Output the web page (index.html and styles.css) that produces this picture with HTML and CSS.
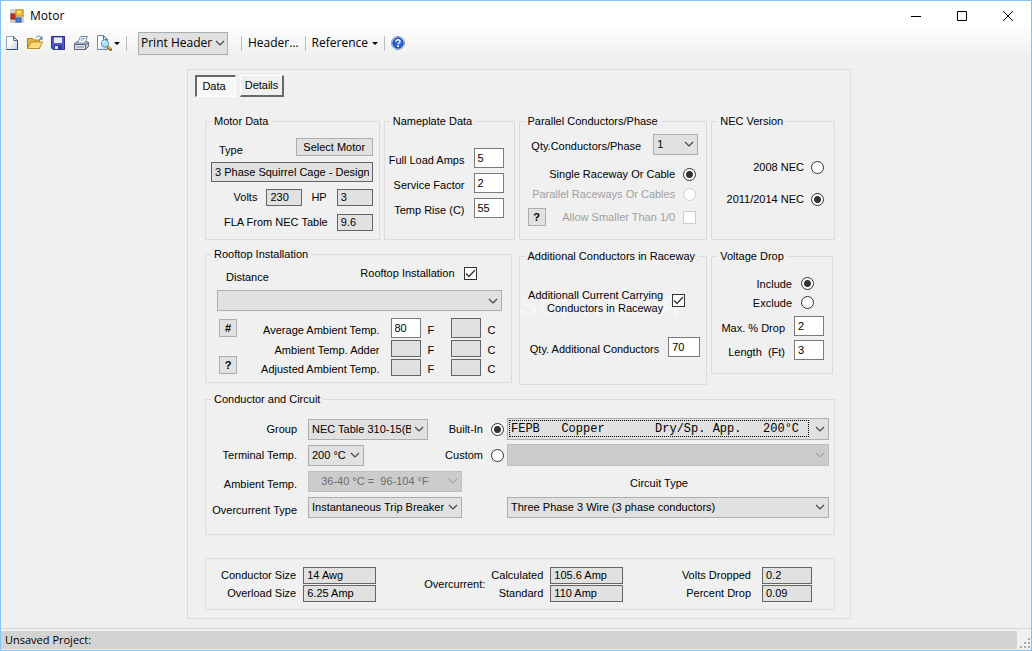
FILE: index.html
```html
<!DOCTYPE html>
<html lang="en">
<head>
    <meta charset="UTF-8">
    <meta name="viewport" content="width=device-width, initial-scale=1.0">
    <title>Motor</title>
    <link rel="stylesheet" href="styles.css">
</head>
<body>
    <div class="window">
        <header class="title-bar">
            <svg class="app-icon" width="14" height="14" viewBox="0 0 14 14">
                <rect x="0" y="0" width="14" height="14" fill="#d4d0c8"/>
                <rect x="1" y="5" width="4" height="5" fill="#c8311c" stroke="#8e1d10"/>
                <rect x="6" y="1" width="7" height="6" fill="#fbc62f" stroke="#c98a10"/>
                <rect x="7" y="2" width="4" height="2" fill="#ffe58a"/>
                <rect x="6" y="9" width="5" height="4" fill="#4f83e0" stroke="#2450a8"/>
            </svg>
            <h1>Motor</h1>
            <div class="window-buttons">
                <button type="button" aria-label="Minimize"><svg width="12" height="12" viewBox="0 0 12 12"><path d="M1 6.500h10" /></svg></button>
                <button type="button" aria-label="Maximize"><svg width="12" height="12" viewBox="0 0 12 12"><path d="M1.500 1.500h9v9h-9z" /></svg></button>
                <button type="button" aria-label="Close"><svg width="12" height="12" viewBox="0 0 12 12"><path d="M1 1l10 10M11 1L1 11" /></svg></button>
            </div>
        </header>

        <nav class="toolbar">
            <div class="tool-icons">
                <button type="button" aria-label="New">
                    <svg width="16" height="16" viewBox="0 0 16 16">
                        <defs><linearGradient id="paper" x1="0" y1="0" x2="1" y2="1"><stop offset="0.4" stop-color="#fff"/><stop offset="1" stop-color="#b9cbe6"/></linearGradient></defs>
                        <path d="M2.500 1.500h7l4 4v9h-11z" fill="url(#paper)" stroke="#8ba0c0"/>
                        <path d="M13.500 5v9.500h-11" fill="none" stroke="#2f4a78"/>
                        <path d="M9.500 1.500v4h4z" fill="#dbe6f5" stroke="#4d6a98"/>
                    </svg>
                </button>
                <button type="button" aria-label="Open">
                    <svg width="16" height="16" viewBox="0 0 16 16">
                        <path d="M.5 13.500v-10h5l1.500 1.500h5.500v8.500z" fill="#e5b340" stroke="#b07f1e"/>
                        <path d="M.8 13.500l3-6.500h11.700l-3.200 6.500z" fill="#ffdd7a" stroke="#c08c22"/>
                        <path d="M9 2.500c1.500-2 4-1.800 5.200 0" fill="none" stroke="#5f7ea8"/>
                        <path d="M15.500 .8v4h-4z" fill="#5f7ea8"/>
                    </svg>
                </button>
                <button type="button" aria-label="Save">
                    <svg width="16" height="16" viewBox="0 0 16 16">
                        <path d="M1.500 1.500h13v13h-11.500l-1.500-1.500z" fill="#5159cf" stroke="#272f91"/>
                        <rect x="4" y="2" width="8" height="6" fill="#e9edfa"/>
                        <rect x="4" y="2" width="8" height="1" fill="#9ba6e6"/>
                        <rect x="4" y="10" width="8" height="5" fill="#323a8d"/>
                        <rect x="5" y="11" width="3" height="3" fill="#dde2f2"/>
                    </svg>
                </button>
                <button type="button" aria-label="Print">
                    <svg width="16" height="16" viewBox="0 0 16 16">
                        <path d="M1.500 8.500l3-2h9l2 1v4l-3 3h-11z" fill="#b9c3d4" stroke="#5c6980"/>
                        <path d="M4.500 8l3-6.500h7l-2.500 6.500z" fill="#fff" stroke="#7889a6"/>
                        <path d="M8 3.500h4M7.200 5h4" stroke="#93a8ca"/>
                        <path d="M1.500 9.500h11v5h-11z" fill="#dfe5ef" stroke="#56647d"/>
                        <path d="M3 12h8" stroke="#7d8aa2" stroke-width="1"/>
                        <path d="M12.500 9.500l3-2" stroke="#56647d"/>
                    </svg>
                </button>
                <button type="button" class="preview" aria-label="Print preview">
                    <svg width="16" height="16" viewBox="0 0 16 16">
                        <path d="M1.500 .5h6l4 4v10h-10z" fill="url(#paper)" stroke="#6f88b2"/>
                        <path d="M7.500 .5v4h4z" fill="#dbe6f5" stroke="#4d6a98"/>
                        <path d="M11.500 11.500l3 3" stroke="#8a6114" stroke-width="3" stroke-linecap="round"/>
                        <path d="M12 11.500l2.500 2.500" stroke="#f2ba36" stroke-width="1.500"/>
                        <circle cx="9" cy="8.500" r="3.700" fill="#a5e3fa" stroke="#5e98bd"/>
                        <path d="M7 8a2 2 0 0 1 2-1.800" stroke="#fff" fill="none"/>
                    </svg>
                    <span class="arrow"></span>
                </button>
            </div>
            <span class="separator"></span>
            <select class="header-select" aria-label="Print header"><option>Print Header</option></select>
            <span class="separator"></span>
            <button type="button" class="tool-text">Header…</button>
            <span class="separator"></span>
            <button type="button" class="tool-text">Reference <span class="arrow"></span></button>
            <span class="separator"></span>
            <button type="button" aria-label="Help">
                <svg width="14" height="14" viewBox="0 0 14 14">
                    <circle cx="7" cy="7" r="6.500" fill="#dce7fb" stroke="#7f9bd0"/>
                    <circle cx="7" cy="7" r="5.200" fill="#2b62d9" stroke="#1c47ae"/>
                    <path d="M5 5.700c0-2.600 4-2.600 4-.2 0 1.500-2 1.400-2 3" fill="none" stroke="#fff" stroke-width="1.400"/>
                    <rect x="6" y="9.500" width="2" height="1.500" fill="#fff"/>
                </svg>
            </button>
        </nav>

        <main>
            <form class="panel">
                <div class="tabs">
                    <button type="button" class="tab active">Data</button>
                    <button type="button" class="tab">Details</button>
                </div>

                <div class="groups-top">
                    <fieldset class="motor">
                        <legend>Motor Data</legend>
                        <div class="row spread">
                            <label for="type" class="type-label">Type</label>
                            <button type="button" class="btn">Select Motor</button>
                        </div>
                        <div class="row"><input id="type" class="box tall" value="3 Phase Squirrel Cage - Design" readonly></div>
                        <div class="row">
                            <label for="volts">Volts</label>
                            <input id="volts" class="box w36" value="230" readonly>
                            <label for="hp">HP</label>
                            <input id="hp" class="box w36 last" value="3" readonly>
                        </div>
                        <div class="row">
                            <label for="fla">FLA From NEC Table</label>
                            <input id="fla" class="box w36" value="9.6" readonly>
                        </div>
                    </fieldset>

                    <fieldset class="nameplate">
                        <legend>Nameplate Data</legend>
                        <div class="row"><label for="amps">Full Load Amps</label><input id="amps" class="field" value="5"></div>
                        <div class="row"><label for="factor">Service Factor</label><input id="factor" class="field" value="2"></div>
                        <div class="row"><label for="rise">Temp Rise (C)</label><input id="rise" class="field" value="55"></div>
                    </fieldset>

                    <fieldset class="parallel">
                        <legend>Parallel Conductors/Phase</legend>
                        <div class="row qty">
                            <label for="qty-phase">Qty.Conductors/Phase</label>
                            <select id="qty-phase"><option>1</option></select>
                        </div>
                        <div class="row"><label for="single">Single Raceway Or Cable</label><input type="radio" name="raceway" id="single" checked></div>
                        <div class="row"><label for="parallel" class="off">Parallel Raceways Or Cables</label><input type="radio" name="raceway" id="parallel" disabled></div>
                        <div class="row smaller">
                            <button type="button" class="btn square">?</button>
                            <label for="smaller" class="off">Allow Smaller Than 1/0</label>
                            <input type="checkbox" id="smaller" disabled>
                        </div>
                    </fieldset>

                    <fieldset class="nec">
                        <legend>NEC Version</legend>
                        <div class="row"><label for="nec08">2008 NEC</label><input type="radio" name="nec" id="nec08"></div>
                        <div class="row"><label for="nec11">2011/2014 NEC</label><input type="radio" name="nec" id="nec11" checked></div>
                    </fieldset>
                </div>

                <div class="groups-middle">
                    <fieldset class="rooftop">
                        <legend>Rooftop Installation</legend>
                        <div class="row spread">
                            <label for="distance">Distance</label>
                            <span class="row check">
                                <label for="roof">Rooftop Installation</label>
                                <input type="checkbox" id="roof" checked>
                            </span>
                        </div>
                        <select id="distance"><option></option></select>
                        <div class="temps">
                            <div class="temp-buttons">
                                <button type="button" class="btn square">#</button>
                                <button type="button" class="btn square">?</button>
                            </div>
                            <div class="temp-grid">
                                <label for="avg-f">Average Ambient Temp.</label>
                                <input id="avg-f" class="field" value="80"><span>F</span>
                                <input class="box tall" aria-label="Average, Celsius" readonly><span>C</span>
                                <label for="add-f">Ambient Temp. Adder</label>
                                <input id="add-f" class="box" readonly><span>F</span>
                                <input class="box" aria-label="Adder, Celsius" readonly><span>C</span>
                                <label for="adj-f">Adjusted Ambient Temp.</label>
                                <input id="adj-f" class="box" readonly><span>F</span>
                                <input class="box" aria-label="Adjusted, Celsius" readonly><span>C</span>
                            </div>
                        </div>
                    </fieldset>

                    <fieldset class="additional">
                        <legend>Additional Conductors in Raceway</legend>
                        <span class="watermark" aria-hidden="true">SOFTPEDIA</span>
                        <div class="row carrying">
                            <label for="carrying">Additionall Current Carrying<br>Conductors in Raceway</label>
                            <input type="checkbox" id="carrying" checked>
                        </div>
                        <div class="row">
                            <label for="qty-add">Qty. Additional Conductors</label>
                            <input id="qty-add" class="field" value="70">
                        </div>
                    </fieldset>

                    <fieldset class="voltage">
                        <legend>Voltage Drop</legend>
                        <div class="row pick"><label for="include">Include</label><input type="radio" name="drop" id="include" checked></div>
                        <div class="row pick"><label for="exclude">Exclude</label><input type="radio" name="drop" id="exclude"></div>
                        <div class="row value"><label for="max-drop">Max. % Drop</label><input id="max-drop" class="field" value="2"></div>
                        <div class="row value"><label for="length">Length &nbsp;(Ft)</label><input id="length" class="field" value="3"></div>
                    </fieldset>
                </div>

                <fieldset class="conductor">
                    <legend>Conductor and Circuit</legend>
                    <div class="circuit-left">
                        <label for="group">Group</label>
                        <select id="group" class="w120"><option>NEC Table 310-15(B)(16)</option></select>
                        <label for="terminal">Terminal Temp.</label>
                        <select id="terminal" class="w56"><option>200 °C</option></select>
                        <label for="ambient" class="low">Ambient Temp.</label>
                        <select id="ambient" disabled><option>&nbsp;&nbsp; 36-40 °C =&nbsp; 96-104 °F</option></select>
                        <label for="overcurrent" class="low">Overcurrent Type</label>
                        <select id="overcurrent"><option>Instantaneous Trip Breaker</option></select>
                    </div>
                    <div class="circuit-right">
                        <span class="row source"><label for="builtin">Built-In</label><input type="radio" name="source" id="builtin" checked></span>
                        <div class="focused">
                            <select class="mono" aria-label="Built-in conductor"><option>FEPB&nbsp;&nbsp; Copper&nbsp;&nbsp;&nbsp;&nbsp;&nbsp;&nbsp; Dry/Sp. App.&nbsp;&nbsp; 200°C</option></select>
                        </div>
                        <span class="row source"><label for="custom">Custom</label><input type="radio" name="source" id="custom"></span>
                        <select aria-label="Custom conductor" disabled><option></option></select>
                        <label for="circuit" class="circuit-label">Circuit Type</label>
                        <select id="circuit" class="circuit-select"><option>Three Phase 3 Wire (3 phase conductors)</option></select>
                    </div>
                </fieldset>

                <section class="results">
                    <div class="result-grid">
                        <label for="size">Conductor Size</label><input id="size" class="box" value="14 Awg" readonly>
                        <label for="overload">Overload Size</label><input id="overload" class="box" value="6.25 Amp" readonly>
                    </div>
                    <span class="over-title">Overcurrent:</span>
                    <div class="result-grid">
                        <label for="calc">Calculated</label><input id="calc" class="box" value="105.6 Amp" readonly>
                        <label for="standard">Standard</label><input id="standard" class="box" value="110 Amp" readonly>
                    </div>
                    <div class="result-grid dropped">
                        <label for="v-drop">Volts Dropped</label><input id="v-drop" class="box" value="0.2" readonly>
                        <label for="p-drop">Percent Drop</label><input id="p-drop" class="box" value="0.09" readonly>
                    </div>
                </section>
            </form>
        </main>

        <footer class="status-bar">
            <span class="status">Unsaved Project:</span>
            <svg class="grip" width="12" height="12" viewBox="0 0 12 12">
                <path d="M9 1h2v2h-2zM5 5h2v2h-2zM9 5h2v2h-2zM1 9h2v2h-2zM5 9h2v2h-2zM9 9h2v2h-2z" fill="#a8a8a8"/>
            </svg>
        </footer>
    </div>
</body>
</html>
```

FILE: styles.css
```css
:root {
    --face: #f0f0f0;
    --line: #dcdcdc;
    --control: #e1e1e1;
    --control-border: #adadad;
    --box-border: #646464;
    --field-border: #7a7a7a;
    --accent: #84c3f7;
    --chevron: url("data:image/svg+xml,%3Csvg xmlns='http://www.w3.org/2000/svg' width='10' height='6'%3E%3Cpath d='M1 1l4 4 4-4' fill='none' stroke='%23444' stroke-width='1.200'/%3E%3C/svg%3E");
    --chevron-off: url("data:image/svg+xml,%3Csvg xmlns='http://www.w3.org/2000/svg' width='10' height='6'%3E%3Cpath d='M1 1l4 4 4-4' fill='none' stroke='%23a6a6a6' stroke-width='1.200'/%3E%3C/svg%3E");
    --tick: url("data:image/svg+xml,%3Csvg xmlns='http://www.w3.org/2000/svg' width='11' height='11'%3E%3Cpath d='M1 5.500l3 3 6-6.500' fill='none' stroke='%23333' stroke-width='1.300'/%3E%3C/svg%3E");
}

* {
    margin: 0;
    padding: 0;
    box-sizing: border-box;
}

body {
    font-family: "Liberation Sans", Arial, sans-serif;
    font-size: 11px;
    line-height: 14px;
    color: #000;
    background: var(--face);
}

button, input, select {
    font: inherit;
    color: inherit;
}

.window {
    min-height: 100vh;
    display: flex;
    flex-direction: column;
    border: 1px solid var(--accent);
}

/* title bar */
.title-bar {
    display: flex;
    align-items: center;
    height: 29px;
    padding-left: 9px;
    background: #fff;
    font-family: "Open Sans", sans-serif;
}

.title-bar h1 {
    margin-left: 6px;
    font-size: 12px;
    font-weight: 400;
}

.window-buttons {
    display: flex;
    margin-left: auto;
}

.window-buttons button {
    width: 46px;
    height: 28px;
    border: none;
    background: none;
}

.window-buttons svg {
    display: block;
    margin: 0 auto;
    fill: none;
    stroke: #000;
}

/* toolbar */
.toolbar {
    display: flex;
    align-items: center;
    height: 26px;
    padding-left: 3px;
    background: linear-gradient(#fcfcfc, var(--face));
    font-family: "Open Sans", sans-serif;
    font-size: 12px;
}

.toolbar button {
    display: flex;
    align-items: center;
    border: none;
    background: none;
}

.tool-icons {
    display: flex;
    gap: 7px;
}

.arrow {
    border: 3px solid transparent;
    border-top-color: #000;
    border-bottom: none;
}

.preview .arrow {
    margin-left: 2px;
}

.separator {
    width: 1px;
    height: 15px;
    margin: 0 6px;
    background: #bdbdbd;
}

/* controls */
select {
    appearance: none;
    width: 100%;
    height: 21px;
    padding: 0 16px 0 3px;
    border: 1px solid var(--control-border);
    border-radius: 0;
    background: var(--control) var(--chevron) no-repeat right 3px center;
    text-overflow: clip;
}

select:disabled {
    border-color: #bfbfbf;
    background: #ccc var(--chevron-off) no-repeat right 3px center;
    color: #6d6d6d;
    opacity: 1;
}

.header-select {
    width: 90px;
    height: 23px;
    margin: 0 7px 0 5px;
    padding: 0 13px 0 2px;
    background-position: right 2px center;
}

.tool-text .arrow {
    margin-left: 4px;
}

.box,
.field {
    flex: none;
    width: 30px;
    height: 20px;
    padding: 0 3px;
    border: 1px solid var(--field-border);
    background: #fff;
}

.box {
    height: 17px;
    border-color: var(--box-border);
    background: var(--control);
}

.box.tall {
    height: 20px;
}

.w36 {
    width: 36px;
}

.btn {
    height: 18px;
    border: 1px solid var(--control-border);
    background: var(--control);
}

.square {
    width: 18px;
    font-weight: 700;
}

input[type="radio"],
input[type="checkbox"] {
    appearance: none;
    flex: none;
    width: 13px;
    height: 13px;
    border: 1px solid #333;
    background: #fff;
}

input[type="radio"] {
    border-radius: 50%;
}

input[type="radio"]:checked {
    background: radial-gradient(#333 3px, #fff 4px);
}

input[type="checkbox"]:checked {
    background: #fff var(--tick) center no-repeat;
}

input:disabled {
    border-color: #ccc;
}

.off {
    color: #a0a0a0;
}

.row {
    display: flex;
    align-items: center;
    justify-content: flex-end;
    gap: 9px;
}

.spread {
    justify-content: space-between;
}

/* panel */
main {
    flex: 1;
    padding: 13px 180px 9px 186px;
}

.panel {
    height: 100%;
    padding: 5px 15px 8px 17px;
    border: 1px solid var(--line);
}

.tabs {
    display: flex;
    gap: 4px;
    margin: 0 0 17px -10px;
}

.tab {
    width: 44px;
    height: 22px;
    padding-bottom: 2px;
    border: 1px solid #fff;
    border-right: 2px solid #696969;
    border-bottom: 2px solid #696969;
    background: var(--face);
}

.tab.active {
    width: 41px;
    padding-right: 4px;
    border: 1px solid #fff;
    border-left: 2px solid #696969;
    border-top: 2px solid #696969;
    background: #f8f8f8;
}

fieldset {
    min-width: 0;
    padding: 0 10px 0 5px;
    border: 1px solid var(--line);
}

legend {
    padding: 0 3px;
    white-space: nowrap;
}

label {
    white-space: nowrap;
}

.groups-top {
    display: grid;
    grid-template-columns: 175fr 131fr 189fr 124fr;
    gap: 4px;
    height: 126px;
    margin-bottom: 7px;
}

.motor {
    padding: 10px 6px 0 5px;
}

.motor .row {
    height: 18px;
    margin-bottom: 7px;
}

.motor .type-label {
    margin: 6px 0 0 8px;
}

.motor .btn {
    width: 77px;
}

.motor #type {
    width: 100%;
}

.motor .last {
    margin-left: 1px;
}

.nameplate {
    padding-top: 20px;
}

.nameplate .row {
    height: 20px;
    margin-bottom: 5px;
}

.nameplate label,
.temp-grid label,
.temp-grid span,
.voltage .value label,
.additional .row > label {
    padding-top: 3px;
}

.parallel {
    padding: 6px 8px 0 5px;
}

.parallel .row {
    height: 20px;
    gap: 8px;
    padding-right: 2px;
}

.parallel .qty {
    gap: 12px;
    margin-bottom: 10px;
    padding-right: 0;
}

.parallel .qty label {
    padding-top: 4px;
}

.parallel .qty select {
    width: 45px;
}

.parallel .smaller {
    margin-top: 3px;
}

.parallel .square {
    margin-right: auto;
    margin-left: 3px;
}

.nec {
    padding-top: 23px;
}

.nec .row {
    height: 32px;
    gap: 7px;
}

.groups-middle {
    display: grid;
    grid-template-columns: 310fr 189fr 124fr;
    align-items: start;
    gap: 4px;
    height: 138px;
    margin-bottom: 7px;
}

.rooftop {
    height: 136px;
    margin-right: 3px;
    padding: 4px 9px 0 11px;
}

.rooftop legend {
    margin-left: -6px;
}

.rooftop > .spread {
    height: 16px;
    margin-bottom: 9px;
    padding: 0 25px 0 9px;
}

.rooftop > .spread > label {
    padding-top: 8px;
}

.temps {
    display: flex;
    padding: 7px 12px 0 2px;
}

.temp-buttons {
    display: flex;
    flex-direction: column;
    justify-content: space-between;
    height: 56px;
    padding-top: 1px;
}

.temp-grid {
    flex: 1;
    display: grid;
    grid-template-columns: 1fr 30px 30px 30px 9px;
    grid-template-rows: 20px 17px 17px;
    align-items: center;
    row-gap: 2px;
}

.temp-grid label {
    padding-right: 11px;
    text-align: right;
}

.temp-grid span {
    padding-left: 7px;
}

.additional {
    position: relative;
    height: 136px;
    margin-top: 2px;
    padding: 23px 6px 0 5px;
}

.watermark {
    position: absolute;
    top: 28px;
    left: 0;
    color: rgba(255, 255, 255, 0.4);
    font-size: 28px;
    line-height: 30px;
    font-weight: 700;
}

.additional .row {
    position: relative;
}

.additional .carrying {
    margin-bottom: 22px;
    padding-right: 15px;
    line-height: 13px;
    text-align: right;
}

.additional .field {
    width: 32px;
}

.voltage {
    height: 125px;
    margin: 2px 2px 0 0;
    padding: 11px 8px 0 5px;
}

.voltage .pick {
    height: 19px;
    padding-right: 10px;
}

.voltage .value {
    height: 20px;
    margin-top: 4px;
}

/* conductor and circuit */
.conductor {
    display: grid;
    grid-template-columns: 251px 1fr;
    gap: 0;
    height: 143px;
    margin-bottom: 23px;
    padding: 10px 5px 0;
}

.circuit-left,
.circuit-right {
    display: grid;
    grid-template-rows: repeat(4, 26px);
    align-items: center;
    align-content: start;
}

.circuit-left {
    grid-template-columns: 1fr 154px;
    column-gap: 11px;
    text-align: right;
}

.circuit-left .low {
    padding-top: 6px;
}

.circuit-right {
    grid-template-columns: 42px 1fr;
    column-gap: 3px;
}

.circuit-right .source {
    gap: 8px;
}

.circuit-right select {
    height: 22px;
}

.circuit-right .circuit-label,
.circuit-right .circuit-select {
    grid-column: 2;
}

.circuit-right .circuit-select {
    height: 21px;
}

.circuit-label {
    padding: 4px 18px 0 0;
    text-align: center;
}

.w120 {
    width: 120px;
}

.w56 {
    width: 56px;
}

.focused {
    position: relative;
}

.focused::after {
    content: "";
    position: absolute;
    inset: 2px 20px 3px 2px;
    border: 1px dotted #000;
    pointer-events: none;
}

.mono {
    font-family: "Liberation Mono", "Courier New", monospace;
    font-size: 12px;
}

/* results */
.results {
    display: flex;
    align-items: center;
    height: 52px;
    padding: 0 22px 0 15px;
    border: 1px solid var(--line);
}

.result-grid {
    display: grid;
    grid-template-columns: auto 73px;
    align-items: center;
    gap: 1px 7px;
    text-align: right;
}

.over-title {
    margin: 0 6px 0 48px;
}

.dropped {
    grid-template-columns: auto 50px;
    column-gap: 11px;
    margin-left: auto;
}

.result-grid .box {
    width: 100%;
}

/* status bar */
.status-bar {
    display: flex;
    align-items: flex-end;
    height: 22px;
    padding-bottom: 1px;
    border-top: 1px solid #d7d7d7;
    font-family: "Open Sans", sans-serif;
}

.status {
    flex: 1;
    padding: 2px 4px;
    background: #d3d3d3;
}

.grip {
    margin-left: 2px;
}
```
